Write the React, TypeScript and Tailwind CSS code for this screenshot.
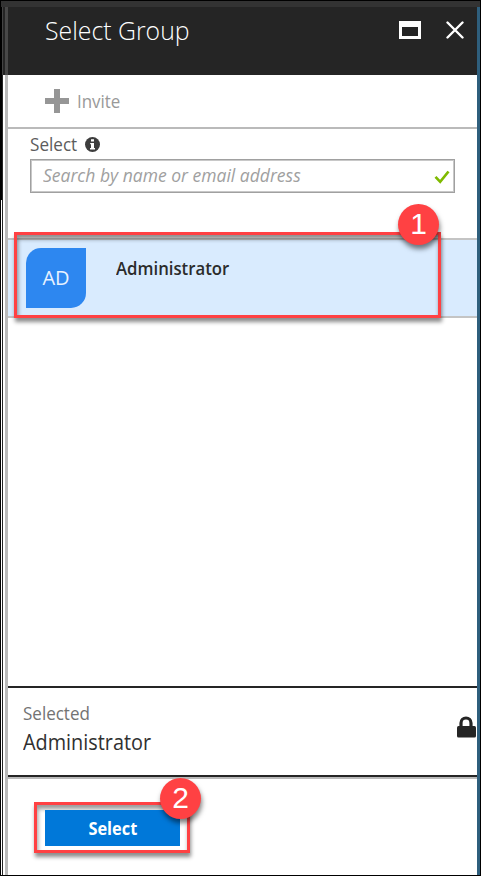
import React from "react";

function Callout({ n, className }: { n: number; className: string }) {
  return (
    <span
      className={`absolute flex h-[41px] w-[41px] items-center justify-center rounded-full bg-[#ff4143] font-['Liberation_Sans',sans-serif] text-[30px] leading-none text-white shadow-[1px_4px_5px_rgba(0,0,0,0.5)] ${className}`}
    >
      <span className="-mt-[2px]">{n}</span>
    </span>
  );
}

function Header() {
  return (
    <header className="flex h-[68px] shrink-0 items-start bg-[#252525] pl-[37px] pt-[5px] text-white">
      <h1 className="h-9 w-[354px] origin-left scale-x-[0.937] whitespace-nowrap text-[26.5px] font-light leading-9">Select Group</h1>
      <svg className="mt-[9px] h-[18px] w-[22px]" viewBox="0 0 22 18" shapeRendering="crispEdges">
        <path d="M0 0h22v18H0zM3 6v9h16V6z" fill="white" fillRule="evenodd" />
      </svg>
      <svg className="ml-[25px] mt-[9px] h-[18px] w-[18px]" viewBox="0 0 18 18">
        <path d="M1.5 1.5l15 15M16.5 1.5l-15 15" stroke="white" strokeWidth="2.4" strokeLinecap="round" />
      </svg>
    </header>
  );
}

export default function App() {
  return (
    <div className="flex h-[876px] w-[481px] overflow-hidden border border-black bg-white font-['Open_Sans','Noto_Sans',sans-serif]">
      <div className="flex w-[7px] shrink-0 flex-col">
        <div className="h-[6px] bg-[#333]" />
        <div className="flex h-[68px] shrink-0">
          <div className="w-px bg-black" />
          <div className="w-px bg-[#444]" />
          <div className="w-[2px] bg-[#252525]" />
          <div className="w-[3px] bg-[#484848]" />
        </div>
        <div className="flex flex-1">
          <div className="w-px pb-[675px]"><div className="h-full bg-black" /></div>
          <div className="w-px bg-[#252525]" />
          <div className="w-[2px]" />
          <div className="w-[3px] bg-[#bababa]" />
        </div>
      </div>
      <div className="flex min-w-0 flex-1 flex-col">
        <div className="h-[6px] shrink-0 bg-[#333]" />
        <div className="flex min-h-0 flex-1">
          <main className="flex min-w-0 flex-1 flex-col">
            <Header />
            <div className="flex h-[54px] shrink-0 items-center border-b-2 border-[#bababa] pl-[37px] text-[#999]">
              <svg className="h-6 w-6" viewBox="0 0 24 24" shapeRendering="crispEdges">
                <path d="M9 0h6v9h9v6h-9v9H9v-9H0V9h9z" fill="#969696" />
              </svg>
              <span className="ml-2 origin-left scale-x-[0.94] text-[18px] leading-6">Invite</span>
            </div>
            <section className="h-[109px] shrink-0 pl-[22px] pr-[22px] pt-[4px]">
              <div className="flex h-[26px] items-center">
                <label className="-mt-[4px] w-[55px] origin-left scale-x-[0.95] text-[18px] leading-6 text-[#5c5c5c]">Select</label>
                <svg className="mb-[3px] h-[15px] w-[15px]" viewBox="0 0 15 15">
                  <circle cx="7.5" cy="7.5" r="7.5" fill="#3d3d3d" />
                  <path d="M6 2.2h3v2.3H6zM5.2 6H9v5h1v1.4H5V11h1V7.3h-.8z" fill="white" />
                </svg>
              </div>
              <div className="flex h-[34px] items-center border-[1.5px] border-[#a0a0a0] pl-3 pr-[4px] outline outline-[0.5px] -outline-offset-2 outline-[#c8c8c8]">
                <span className="-mt-[3px] flex-1 origin-left scale-x-[0.973] whitespace-nowrap text-[18px] italic leading-7 text-[#a0a0a0]">Search by name or email address</span>
                <svg className="mt-[2px] h-[14px] w-[16px]" viewBox="0 0 16 14">
                  <path d="M1.5 6.8l4.7 5L14.5 1.5" fill="none" stroke="#7fba00" strokeWidth="2.7" />
                </svg>
              </div>
            </section>
            <div className="relative flex h-20 shrink-0 border-y-2 border-[#c4c4c4] bg-[#d9ebfe] pl-[18px] pt-2">
              <div className="flex h-[60px] w-[60px] items-center justify-center rounded-br-[15px] rounded-tl-[15px] bg-[#2d87f0] text-[20px] text-[#e7f2ff]">AD</div>
              <span className="ml-[30px] mt-[8px] origin-left scale-x-[0.93] text-[18px] font-semibold leading-6 text-[#2b2b2b]">Administrator</span>
              <div className="absolute left-[6px] top-[-8px] h-[86px] w-[427px] border-[3px] border-[#ff4143] shadow-[1px_4px_4px_rgba(0,0,0,0.45),inset_1px_4px_4px_rgba(0,0,0,0.45)]" />
              <Callout n={1} className="left-[390px] top-[-36px]" />
            </div>
            <div className="flex-1" />
            <section className="flex h-[91px] shrink-0 border-y-2 border-[#252525] pl-[14px]">
              <div className="w-[434px] pl-[0.5px] pt-[12px]">
                <div className="origin-left scale-x-[0.945] text-[18px] leading-[26px] text-[#737373]">Selected</div>
                <div className="origin-left scale-x-[0.945] text-[21px] leading-8 text-[#303030]">Administrator</div>
              </div>
              <svg className="mt-[28px] h-[22px] w-[20px] shrink-0" viewBox="0 0 20 22">
                <path d="M5 11V7a5 5 0 0 1 10 0v4" fill="none" stroke="#252525" strokeWidth="3.2" />
                <rect x="1" y="10" width="19" height="11.5" rx="1.5" fill="#252525" />
              </svg>
            </section>
            <footer className="h-[98px] shrink-0 border-t-2 border-[#bababa] pl-[26px] pt-[23px]">
              <div className="relative flex h-[51px] w-[156px] items-center justify-center border-[3px] border-[#ff4143] shadow-[1px_4px_4px_rgba(0,0,0,0.45),inset_1px_4px_4px_rgba(0,0,0,0.4)]">
                <button className="mt-px h-9 w-[135px] bg-[#0078d9] text-[18px] font-bold leading-[37px] text-white">
                  <span className="ml-px inline-block scale-x-[0.91]">Select</span>
                </button>
                <Callout n={2} className="left-[123px] top-[-27px]" />
              </div>
            </footer>
          </main>
          <div className="w-[3px] shrink-0 bg-[#2f5f7d]" />
        </div>
      </div>
    </div>
  );
}
